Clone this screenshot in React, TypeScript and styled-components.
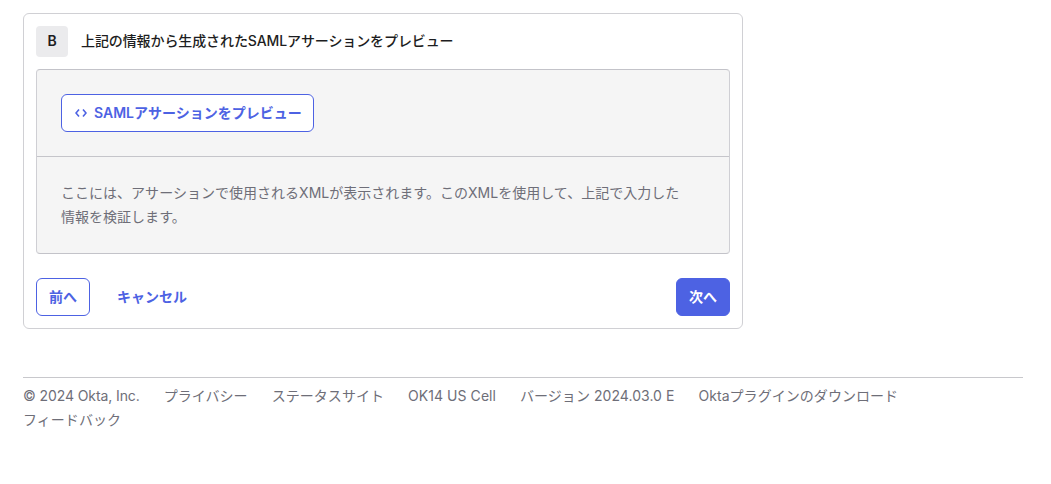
import styled, { createGlobalStyle } from 'styled-components';

const GlobalStyle = createGlobalStyle`
	html, body {
		margin: 0;
		padding: 0;
		background: #fff;
		font-family: Inter, 'Noto Sans CJK JP', sans-serif;
		color: #1d1d21;
	}
`;

const Page = styled.div`
	padding: 13px 28px 0 23px;
`;

const Card = styled.section`
	width: 720px;
	box-sizing: border-box;
	padding: 12px;
	border: 1px solid #d0d0d4;
	border-radius: 6px;
`;

const StepHeader = styled.div`
	display: flex;
	align-items: center;
	gap: 13px;
	margin-bottom: 12px;
`;

const StepBadge = styled.div`
	display: flex;
	align-items: center;
	justify-content: center;
	width: 32px;
	height: 31px;
	box-sizing: border-box;
	padding-bottom: 2px;
	border-radius: 4px;
	background: #ebebed;
	font-size: 14px;
	font-weight: 600;
`;

const StepTitle = styled.h2`
	margin: 0 0 2px;
	font-size: 14px;
	line-height: 20px;
	font-weight: 500;
	letter-spacing: -0.1px;
`;

const PreviewPanel = styled.div`
	border: 1px solid #cfcfd4;
	border-top-color: #c3c3c9;
	border-bottom-color: #c3c3c9;
	border-radius: 4px;
	background: #f5f5f5;
`;

const PreviewAction = styled.div`
	padding: 24px;
	border-bottom: 1px solid #c5c5ca;
`;

const OutlineButton = styled.button`
	display: inline-flex;
	align-items: center;
	gap: 7px;
	height: 38px;
	box-sizing: border-box;
	padding: 0 12px 2px;
	border: 1px solid #4d62e3;
	border-radius: 6px;
	background: #fff;
	color: #4d62e3;
	font: inherit;
	font-size: 14px;
	font-weight: 600;
`;

const PreviewButton = styled(OutlineButton)`
	padding-right: 11px;
`;

const CodeIcon = styled.svg`
	margin: 2px 0 0 1px;
`;

const PreviewNote = styled.p`
	margin: 0;
	padding: 24px 48px 24px 24px;
	color: #6e6e78;
	font-size: 14px;
	line-height: 24px;
	letter-spacing: 0.02px;
`;

const Actions = styled.div`
	display: flex;
	align-items: center;
	margin-top: 24px;
`;

const TextButton = styled.button`
	height: 38px;
	margin-left: 15px;
	padding: 0 12px 2px;
	border: 0;
	background: none;
	color: #4d62e3;
	font: inherit;
	font-size: 14px;
	font-weight: 600;
`;

const PrimaryButton = styled.button`
	height: 38px;
	box-sizing: border-box;
	margin-left: auto;
	padding: 0 12px 2px;
	border: 1px solid #4d62e3;
	border-radius: 6px;
	background: #4d62e3;
	color: #fff;
	font: inherit;
	font-size: 14px;
	font-weight: 600;
`;

const Footer = styled.footer`
	margin-top: 48px;
	padding-top: 6px;
	border-top: 1px solid #c8c8cc;
	display: flex;
	flex-wrap: wrap;
	color: #6e6e78;
	font-size: 14px;
	line-height: 24px;
	letter-spacing: 0.05px;
`;

const FooterItem = styled.span`
	margin-right: 24px;
`;

const Copyright = styled(FooterItem)`
	letter-spacing: -0.1px;
`;

export default function App() {
	return (
		<Page>
			<GlobalStyle />
			<Card>
				<StepHeader>
					<StepBadge>B</StepBadge>
					<StepTitle>上記の情報から生成されたSAMLアサーションをプレビュー</StepTitle>
				</StepHeader>
				<PreviewPanel>
					<PreviewAction>
						<PreviewButton>
							<CodeIcon width="12" height="10" viewBox="0 0 12 10" fill="none" stroke="currentColor" strokeWidth="1.6">
								<path d="M4 1.5 1 5l3 3.5M8 1.5 11 5 8 8.5" />
							</CodeIcon>
							SAMLアサーションをプレビュー
						</PreviewButton>
					</PreviewAction>
					<PreviewNote>
						ここには、アサーションで使用されるXMLが表示されます。このXMLを使用して、上記で入力した情報を検証します。
					</PreviewNote>
				</PreviewPanel>
				<Actions>
					<OutlineButton>前へ</OutlineButton>
					<TextButton>キャンセル</TextButton>
					<PrimaryButton>次へ</PrimaryButton>
				</Actions>
			</Card>
			<Footer>
				<Copyright>© 2024 Okta, Inc.</Copyright>
				<FooterItem>プライバシー</FooterItem>
				<FooterItem>ステータスサイト</FooterItem>
				<FooterItem>OK14 US Cell</FooterItem>
				<FooterItem>バージョン 2024.03.0 E</FooterItem>
				<FooterItem>Oktaプラグインのダウンロード</FooterItem>
				<FooterItem>フィードバック</FooterItem>
			</Footer>
		</Page>
	);
}
